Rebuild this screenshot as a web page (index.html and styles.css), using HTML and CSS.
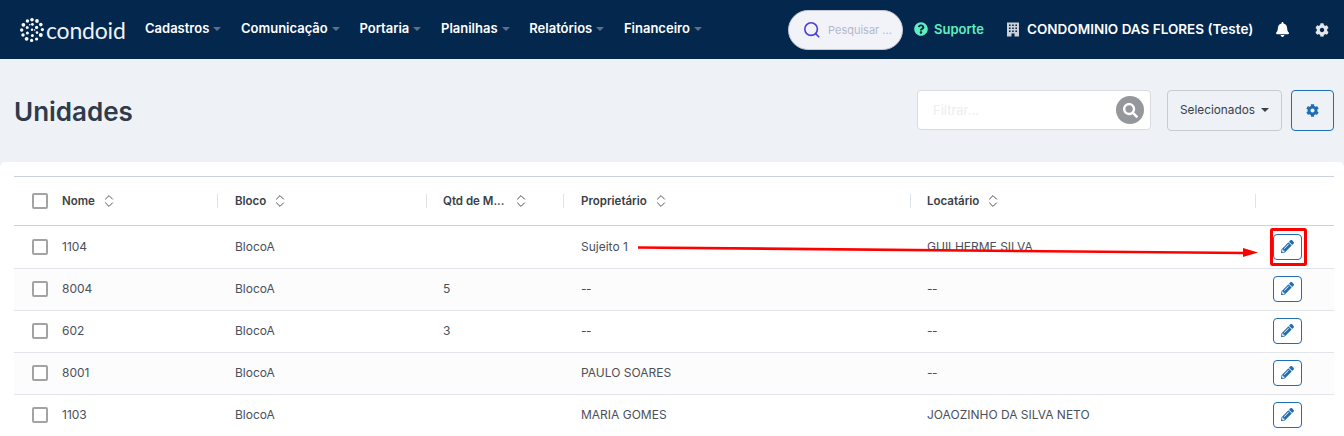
FILE: index.html
```html
<!DOCTYPE html>
<html lang="pt-BR">
<head>
    <meta charset="UTF-8">
    <title>Unidades - Condoid</title>
    <link rel="stylesheet" href="styles.css">
</head>
<body>
    <svg class="icon-defs" width="0" height="0">
        <symbol id="i-cog" viewBox="0 0 512 512"><path d="M487.4 315.7l-42.6-24.6c4.3-23.2 4.3-47 0-70.2l42.6-24.6c4.9-2.8 7.1-8.6 5.5-14-11.1-35.6-30-67.8-54.7-94.6-3.8-4.1-10-5.1-14.8-2.3L380.8 110c-17.9-15.4-38.5-27.3-60.8-35.1V25.8c0-5.6-3.9-10.5-9.4-11.7-36.7-8.2-74.3-7.8-109.2 0-5.5 1.2-9.4 6.1-9.4 11.7V75c-22.2 7.9-42.8 19.8-60.8 35.1L88.7 85.5c-4.9-2.8-11-1.9-14.8 2.3-24.7 26.7-43.6 58.9-54.7 94.6-1.7 5.4.6 11.2 5.5 14L67.3 221c-4.3 23.2-4.3 47 0 70.2l-42.6 24.6c-4.9 2.8-7.1 8.6-5.5 14 11.1 35.6 30 67.8 54.7 94.6 3.8 4.1 10 5.1 14.8 2.3l42.6-24.6c17.9 15.4 38.5 27.3 60.8 35.1v49.2c0 5.6 3.9 10.5 9.4 11.7 36.7 8.2 74.3 7.8 109.2 0 5.5-1.2 9.4-6.1 9.4-11.7v-49.2c22.2-7.9 42.8-19.8 60.8-35.1l42.6 24.6c4.9 2.8 11 1.9 14.8-2.3 24.7-26.7 43.6-58.9 54.7-94.6 1.5-5.5-.7-11.3-5.6-14.1zM256 336c-44.1 0-80-35.9-80-80s35.9-80 80-80 80 35.9 80 80-35.9 80-80 80z"/></symbol>
        <symbol id="i-pencil" viewBox="0 0 512 512"><path d="M497.9 142.1l-46.1 46.1c-4.7 4.7-12.3 4.7-17 0l-111-111c-4.7-4.7-4.7-12.3 0-17l46.1-46.1c18.7-18.7 49.1-18.7 67.9 0l60.1 60.1c18.8 18.7 18.8 49.1 0 67.9zM284.2 99.8L21.6 362.4.4 483.9c-2.9 16.4 11.4 30.6 27.8 27.8l121.5-21.3 262.6-262.6c4.7-4.7 4.7-12.3 0-17l-111-111c-4.8-4.7-12.4-4.7-17.1 0zM124.1 339.9c-5.5-5.5-5.5-14.3 0-19.8l154-154c5.5-5.5 14.3-5.5 19.8 0s5.5 14.3 0 19.8l-154 154c-5.5 5.5-14.3 5.5-19.8 0zM88 424h48v36.3l-64.5 11.3-31.1-31.1L51.7 376H88v48z"/></symbol>
        <symbol id="i-search" viewBox="0 0 512 512"><path d="M505 442.7L405.3 343c-4.5-4.5-10.6-7-17-7H372c27.6-35.3 44-79.7 44-128C416 93.1 322.9 0 208 0S0 93.1 0 208s93.1 208 208 208c48.3 0 92.7-16.4 128-44v16.3c0 6.4 2.5 12.5 7 17l99.7 99.7c9.4 9.4 24.6 9.4 33.9 0l28.3-28.3c9.4-9.4 9.4-24.6.1-34zM208 336c-70.7 0-128-57.2-128-128 0-70.7 57.2-128 128-128 70.7 0 128 57.2 128 128 0 70.7-57.2 128-128 128z"/></symbol>
        <symbol id="i-sort" viewBox="0 0 10 14"><path d="M1.2 5.4 5 1.6l3.8 3.8M1.2 8.6 5 12.4l3.8-3.8" fill="none" stroke="currentColor" stroke-width="1"/></symbol>
    </svg>

    <header class="topbar">
        <div class="logo">
            <svg class="logo-mark" viewBox="0 0 24 24">
                <g fill="#fff">
                    <circle cx="12" cy="1.8" r="1.8"/><circle cx="17" cy="3" r="1.9"/><circle cx="20.8" cy="6.6" r="1.8"/>
                    <circle cx="22.4" cy="11.6" r="1.6"/><circle cx="20.8" cy="17" r="2"/><circle cx="16.6" cy="21" r="1.6"/>
                    <circle cx="11.6" cy="22.4" r="1.6"/><circle cx="6.6" cy="20.8" r="1.9"/><circle cx="3" cy="17" r="1.7"/>
                    <circle cx="1.7" cy="12" r="1.7"/><circle cx="3.4" cy="6.8" r="1.9"/><circle cx="7.4" cy="3" r="1.7"/>
                    <circle cx="12.4" cy="6.4" r="1.4"/><circle cx="16.6" cy="9.4" r="1.6"/><circle cx="17" cy="14.6" r="1.3"/>
                    <circle cx="12.4" cy="17.6" r="1.5"/><circle cx="7.4" cy="15" r="1.5"/><circle cx="7.2" cy="9.4" r="1.5"/>
                    <circle cx="12" cy="11.8" r="1.2"/><circle cx="9.8" cy="6.8" r=".8"/><circle cx="14.6" cy="12" r=".8"/>
                </g>
            </svg>
            <span class="logo-text">condoid</span>
        </div>
        <nav class="menu">
            <a class="menu-item">Cadastros</a>
            <a class="menu-item">Comunicação</a>
            <a class="menu-item">Portaria</a>
            <a class="menu-item">Planilhas</a>
            <a class="menu-item">Relatórios</a>
            <a class="menu-item">Financeiro</a>
        </nav>
        <div class="top-search">
            <svg class="top-search-icon" viewBox="0 0 20 20"><circle cx="9" cy="9" r="7" fill="none" stroke="currentColor" stroke-width="1.8"/><path d="m14 14 4 4" stroke="currentColor" stroke-width="1.8"/></svg>
            <span>Pesquisar ...</span>
        </div>
        <a class="support">
            <svg viewBox="0 0 512 512"><path d="M504 256c0 136.997-111.043 248-248 248S8 392.997 8 256C8 119.083 119.043 8 256 8s248 111.083 248 248zM262.655 90c-54.497 0-89.255 22.957-116.549 63.758-3.536 5.286-2.353 12.415 2.715 16.258l34.699 26.31c5.205 3.947 12.621 3.008 16.665-2.122 17.864-22.658 30.113-35.797 57.303-35.797 20.429 0 45.698 13.148 45.698 32.958 0 14.976-12.363 22.667-32.534 33.976C247.128 238.528 216 254.941 216 296v4c0 6.627 5.373 12 12 12h56c6.627 0 12-5.373 12-12v-1.333c0-28.462 83.186-29.647 83.186-106.667 0-58.002-60.165-102-116.531-102zM256 338c-25.365 0-46 20.635-46 46 0 25.364 20.635 46 46 46s46-20.636 46-46c0-25.365-20.635-46-46-46z"/></svg>
            Suporte
        </a>
        <div class="condo">
            <svg viewBox="0 0 12 14"><path fill-rule="evenodd" d="M0 0h12v14H7.5v-3h-3v3H0zM2 2v1.6h1.6V2zm3.2 0v1.6h1.6V2zm3.2 0v1.6H10V2zM2 5v1.6h1.6V5zm3.2 0v1.6h1.6V5zm3.2 0v1.6H10V5zM2 8v1.6h1.6V8zm3.2 0v1.6h1.6V8zm3.2 0v1.6H10V8z"/></svg>
            CONDOMINIO DAS FLORES (Teste)
        </div>
        <svg class="top-bell" viewBox="0 0 448 512"><path d="M224 512c35.32 0 63.97-28.65 63.97-64H160.03c0 35.35 28.65 64 63.97 64zm215.39-149.71c-19.32-20.76-55.47-51.99-55.47-154.29 0-77.7-54.48-139.9-127.94-155.16V32c0-17.67-14.32-32-31.98-32s-31.98 14.33-31.98 32v20.84C118.56 68.1 64.08 130.3 64.08 208c0 102.3-36.15 133.53-55.47 154.29-6 6.45-8.66 14.16-8.61 21.71.11 16.4 12.98 32 32.1 32h383.8c19.12 0 32-15.6 32.1-32 .05-7.55-2.61-15.27-8.61-21.71z"/></svg>
        <svg class="top-cog"><use href="#i-cog"/></svg>
    </header>

    <section class="page-head">
        <h1>Unidades</h1>
        <div class="filter">
            <span class="filter-text">Filtrar...</span>
            <span class="filter-btn"><svg><use href="#i-search"/></svg></span>
        </div>
        <button class="btn-select">Selecionados<span class="caret"></span></button>
        <button class="btn-config"><svg><use href="#i-cog"/></svg></button>
    </section>

    <main class="card">
        <table class="grid">
            <colgroup>
                <col class="col-check"><col class="col-name"><col class="col-block"><col class="col-qty"><col class="col-owner"><col class="col-tenant"><col class="col-action">
            </colgroup>
            <thead>
                <tr>
                    <th><span class="check"></span></th>
                    <th class="first"><span class="th-in">Nome<svg class="sort"><use href="#i-sort"/></svg></span></th>
                    <th><span class="th-in">Bloco<svg class="sort"><use href="#i-sort"/></svg></span></th>
                    <th class="tight cut"><span class="th-in">Qtd de M...<svg class="sort"><use href="#i-sort"/></svg></span></th>
                    <th><span class="th-in">Proprietário<svg class="sort"><use href="#i-sort"/></svg></span></th>
                    <th class="tight"><span class="th-in">Locatário<svg class="sort"><use href="#i-sort"/></svg></span></th>
                    <th></th>
                </tr>
            </thead>
            <tbody>
                <tr>
                    <td><span class="check"></span></td><td class="first">1104</td><td>BlocoA</td><td class="tight"></td><td>Sujeito 1</td><td class="tight">GUILHERME SILVA</td>
                    <td><button class="btn-edit"><svg><use href="#i-pencil"/></svg></button></td>
                </tr>
                <tr>
                    <td><span class="check"></span></td><td class="first">8004</td><td>BlocoA</td><td class="tight">5</td><td><span class="dash">--</span></td><td class="tight"><span class="dash">--</span></td>
                    <td><button class="btn-edit"><svg><use href="#i-pencil"/></svg></button></td>
                </tr>
                <tr>
                    <td><span class="check"></span></td><td class="first">602</td><td>BlocoA</td><td class="tight">3</td><td><span class="dash">--</span></td><td class="tight"><span class="dash">--</span></td>
                    <td><button class="btn-edit"><svg><use href="#i-pencil"/></svg></button></td>
                </tr>
                <tr>
                    <td><span class="check"></span></td><td class="first">8001</td><td>BlocoA</td><td class="tight"></td><td>PAULO SOARES</td><td class="tight"><span class="dash">--</span></td>
                    <td><button class="btn-edit"><svg><use href="#i-pencil"/></svg></button></td>
                </tr>
                <tr>
                    <td><span class="check"></span></td><td class="first">1103</td><td>BlocoA</td><td class="tight"></td><td>MARIA GOMES</td><td class="tight">JOAOZINHO DA SILVA NETO</td>
                    <td><button class="btn-edit"><svg><use href="#i-pencil"/></svg></button></td>
                </tr>
            </tbody>
        </table>
    </main>

    <!-- anotacao vermelha por cima da tabela -->
    <svg class="markup" viewBox="0 0 1344 436">
        <path d="M638 247.5 1245 253" stroke="#f00" stroke-width="2.6" fill="none"/>
        <path d="M1243 248 1258 252.5 1243 257z" fill="#f00"/>
        <rect x="1271.5" y="229.5" width="34" height="35" rx="1" stroke="#f00" stroke-width="3" fill="none"/>
    </svg>
</body>
</html>
```

FILE: styles.css
```css
:root {
    --navy: #03274d;
    --page-bg: #eef1f6;
    --blue: #1f6db3;
    --text-color: #3a4048;
    --line: #c9d2dc;
    --line-light: #e1e5ea;
}

* {
    box-sizing: border-box;
}

html, body {
    height: 436px;
    overflow: hidden;
}

body {
    margin: 0;
    font-family: 'Inter', 'Lato', sans-serif;
    background-color: var(--page-bg);
    color: var(--text-color);
    position: relative;
}

.icon-defs {
    position: absolute;
}

/* barra superior */
.topbar {
    height: 59px;
    background-color: var(--navy);
    color: #fff;
    display: flex;
    align-items: center;
    padding-left: 20px;
    font-size: 13px;
    font-weight: 600;
}

.logo {
    display: flex;
    align-items: center;
    width: 125px;
    flex: none;
}

.logo-mark {
    width: 24px;
    height: 24px;
    flex: none;
}

.logo-text {
    font-family: 'Lato', sans-serif;
    font-weight: 400;
    font-size: 23px;
    letter-spacing: -0.2px;
    margin-left: 2px;
    color: #eef1f4;
}

.menu {
    display: flex;
    align-items: center;
    gap: 19.7px;
    width: 643px;
    flex: none;
    padding-bottom: 3px;
}

.menu-item {
    display: flex;
    align-items: center;
    white-space: nowrap;
}

.menu-item::after {
    content: "";
    margin-left: 4px;
    margin-top: 2px;
    border-top: 4px solid #5d7186;
    border-left: 4px solid transparent;
    border-right: 4px solid transparent;
}

.top-search {
    width: 115px;
    height: 40px;
    flex: none;
    display: flex;
    align-items: center;
    gap: 7px;
    padding-left: 14px;
    background-color: #f1f3f9;
    border: 1px solid #c3c7d2;
    border-radius: 20px;
    color: #b3b8cc;
    font-size: 11px;
    font-weight: 400;
    white-space: nowrap;
    overflow: hidden;
}

.top-search-icon {
    width: 18px;
    height: 18px;
    flex: none;
    color: #4a3fd8;
}

.support {
    display: flex;
    align-items: center;
    gap: 6px;
    margin-left: 11px;
    padding-bottom: 1px;
    width: 93px;
    flex: none;
    color: #5ff0c0;
}

.support svg {
    width: 14px;
    height: 14px;
    fill: currentColor;
}

.condo {
    display: flex;
    align-items: center;
    gap: 8px;
    width: 269px;
    flex: none;
    padding-bottom: 1px;
    font-size: 13.5px;
    white-space: nowrap;
}

.condo svg {
    width: 12px;
    height: 15px;
    fill: #c9d0d8;
}

.top-bell {
    width: 13px;
    height: 15px;
    fill: #fff;
    flex: none;
}

.top-cog {
    width: 14px;
    height: 14px;
    fill: #e4e7ea;
    flex: none;
    margin-left: 26px;
}

/* titulo e filtros */
.page-head {
    height: 103px;
    display: flex;
    align-items: center;
    padding: 0 10px 1px 14px;
}

.page-head h1 {
    margin: 2px auto 0 0;
    font-size: 26px;
    font-weight: 600;
    color: #2f3b4a;
}

.filter {
    width: 234px;
    height: 40px;
    display: flex;
    align-items: center;
    justify-content: space-between;
    padding: 0 6px 0 15px;
    background-color: #fff;
    border: 1px solid #d8dbe0;
    border-radius: 4px;
}

.filter-text {
    color: #eceef1;
    font-size: 13px;
}

.filter-btn {
    width: 28px;
    height: 28px;
    border-radius: 50%;
    background-color: #94979c;
    display: flex;
    align-items: center;
    justify-content: center;
}

.filter-btn svg {
    width: 15px;
    height: 15px;
    fill: #fff;
}

.btn-select {
    width: 115px;
    height: 41px;
    margin-left: 16px;
    padding: 0;
    font-family: inherit;
    font-size: 11.8px;
    color: var(--text-color);
    background-color: #eef1f6;
    border: 1px solid #c8ccd2;
    border-radius: 4px;
}

.caret {
    display: inline-block;
    margin-left: 6px;
    vertical-align: 2px;
    border-top: 4px solid #3a4048;
    border-left: 4px solid transparent;
    border-right: 4px solid transparent;
}

.btn-config {
    width: 43px;
    height: 41px;
    margin-left: 9px;
    padding: 0;
    display: flex;
    align-items: center;
    justify-content: center;
    background-color: #eef1f6;
    border: 1px solid var(--blue);
    border-radius: 4px;
}

.btn-config svg {
    width: 13px;
    height: 13px;
    fill: var(--blue);
}

/* tabela */
.card {
    height: 274px;
    padding: 14px 10px 0 14px;
    background-color: #fff;
    border-radius: 5px 5px 0 0;
    overflow: hidden;
}

.grid {
    width: 1320px;
    table-layout: fixed;
    border-collapse: collapse;
    font-size: 12px;
}

.col-check { width: 40px; }
.col-name { width: 163px; }
.col-block { width: 209px; }
.col-qty { width: 137px; }
.col-owner { width: 347px; }
.col-tenant { width: 345px; }
.col-action { width: 79px; }

.grid thead tr {
    height: 49px;
    border-top: 1px solid var(--line);
    border-bottom: 1px solid var(--line);
}

.grid th {
    padding: 0 0 0 18px;
    font-size: 11.5px;
    font-weight: 600;
    text-align: left;
    position: relative;
}

.grid th:nth-child(n+3)::before {
    content: "";
    position: absolute;
    left: 0;
    top: 17px;
    height: 14px;
    width: 1px;
    background-color: #dfe4ec;
}

.grid td {
    padding: 0 0 2px 18px;
    height: 42px;
    color: #4b5058;
    white-space: nowrap;
}

.grid tbody tr:first-child td {
    height: 43px;
    padding-bottom: 1px;
}

.grid tbody tr {
    border-bottom: 1px solid var(--line-light);
}

.grid tbody tr:nth-child(even) {
    background-color: #fcfcfc;
}

.grid .first {
    padding-left: 8px;
}

.grid .tight {
    padding-left: 17px;
}

.dash {
    letter-spacing: -0.6px;
}

.th-in {
    display: inline-flex;
    align-items: center;
}

.sort {
    width: 10px;
    height: 14px;
    margin-left: 9px;
    color: #50565e;
}

.cut .sort {
    margin-left: 12px;
}

.check {
    display: block;
    width: 16px;
    height: 16px;
    border: 2px solid #a3a3a3;
    border-radius: 2px;
    background-color: #fff;
}

.btn-edit {
    width: 29px;
    height: 26px;
    padding: 0;
    display: flex;
    align-items: center;
    justify-content: center;
    background-color: #fff;
    border: 1px solid var(--blue);
    border-radius: 4px;
}

.btn-edit svg {
    width: 13px;
    height: 13px;
    fill: var(--blue);
}

.markup {
    position: absolute;
    left: 0;
    top: 0;
    width: 1344px;
    height: 436px;
    pointer-events: none;
}
```
